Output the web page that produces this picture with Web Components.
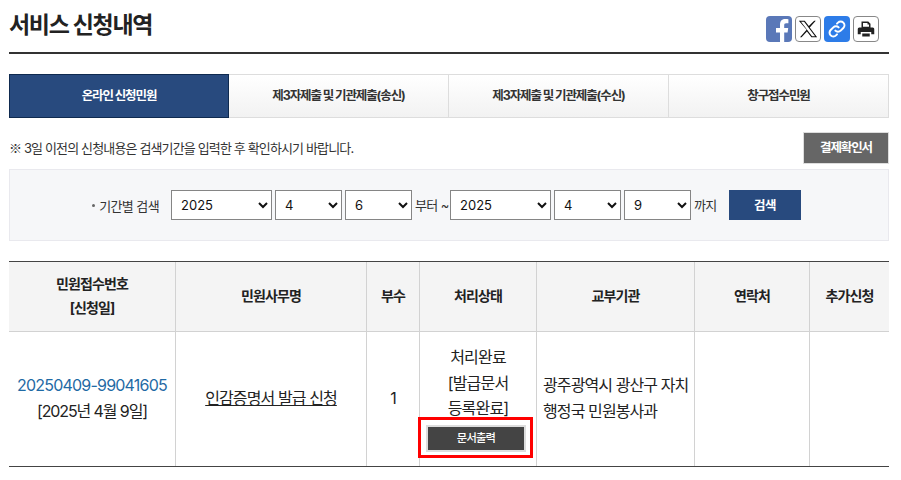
<!DOCTYPE html>
<html lang="ko">
<head>
<meta charset="utf-8">
<title>서비스 신청내역</title>
<style>
  html, body { margin: 0; background: #fff; }
  body { font-family: Inter, "Noto Sans CJK KR", sans-serif; color: #222; }
  main { display: block; width: 880px; padding: 0 12px 0 9px; }
</style>
</head>
<body>
<main>
  <page-head>서비스 신청내역</page-head>
  <tab-bar></tab-bar>
  <notice-row></notice-row>
  <search-box></search-box>
  <result-table></result-table>
</main>
<script>
class PageHead extends HTMLElement {
  constructor() {
    super();
    this.attachShadow({ mode: 'open' }).innerHTML = `
      <style>
        :host { display: flex; justify-content: space-between; align-items: flex-start; height: 52px; border-bottom: 2px solid #333; }
        h1 { margin: 10px 0 0; font-size: 23px; line-height: 30px; font-weight: 700; letter-spacing: -1.300px; color: #222; }
        .share { display: flex; gap: 3px; margin: 16px 10px 0 0; }
        .b { width: 26px; height: 26px; box-sizing: border-box; border-radius: 4px; display: flex; align-items: center; justify-content: center; overflow: hidden; }
        .line { border: 1px solid #888; background: #fff; }
        .fb { background: #5a78b8; }
        .ln { background: #2d7ce8; }
      </style>
      <h1><slot></slot></h1>
      <div class="share">
        <span class="b fb"><svg width="26" height="26" viewBox="0 0 26 26"><path fill="#fff" d="M14 26V16.500h-4V12h4V8.500C14 4.600 16.300 3 19.400 3c1.500 0 2.600.1 3 .2v4h-2.200c-1.700 0-2 .8-2 2V12h4l-.6 4.500h-3.400V26z"/></svg></span>
        <span class="b line"><svg width="20" height="20" viewBox="0 0 24 24"><path fill="#111" fill-rule="evenodd" d="M1 2h7.100l4.900 6.400L19.400 2h1.900l-7.200 8.300L23 22h-6.900l-5.400-7-6.400 7H2.400l7.900-9zM3.600 3.200L16.800 20.800h3.700L7.300 3.200z"/></svg></span>
        <span class="b ln"><svg width="20" height="20" viewBox="0 0 24 24" fill="none" stroke="#fff" stroke-width="2.400" stroke-linecap="round"><path d="M10 14a4.500 4.500 0 0 0 6.400 0l3.200-3.200a4.500 4.500 0 0 0-6.400-6.400l-1.200 1.200"/><path d="M14 10a4.500 4.500 0 0 0-6.400 0l-3.200 3.200a4.500 4.500 0 0 0 6.400 6.400l1.200-1.200"/></svg></span>
        <span class="b line"><svg width="18" height="18" viewBox="0 0 24 24"><path fill="#222" d="M6 2h9l3 3v5H6zm2 2v5h8V6h-2V4zM3 10h18a2 2 0 0 1 2 2v7h-4v-3H5v3H1v-7a2 2 0 0 1 2-2zm4 8h10v4H7z"/></svg></span>
      </div>`;
  }
}
customElements.define('page-head', PageHead);

class TabBar extends HTMLElement {
  constructor() {
    super();
    const tabs = ['온라인 신청민원', '제3자제출 및 기관제출(송신)', '제3자제출 및 기관제출(수신)', '창구접수민원'];
    this.attachShadow({ mode: 'open' }).innerHTML = `
      <style>
        :host { display: grid; grid-template-columns: repeat(4, 220px); margin-top: 20px; height: 44px; }
        a { box-sizing: border-box; display: flex; align-items: center; justify-content: center; font-size: 12.500px; font-weight: 700; letter-spacing: -1.100px; color: #333;
            border: 1px solid #ddd; border-left: 0; padding-bottom: 3px; background: linear-gradient(#fff, #f2f2f2); }
        a:last-child { border-right: 1px solid #ddd; }
        a.on { background: #284a7e; color: #fff; border: 1px solid #0f2a4f; }
      </style>
      ${tabs.map((t, i) => `<a class="${i ? '' : 'on'}">${t}</a>`).join('')}`;
  }
}
customElements.define('tab-bar', TabBar);

class NoticeRow extends HTMLElement {
  constructor() {
    super();
    this.attachShadow({ mode: 'open' }).innerHTML = `
      <style>
        :host { display: flex; justify-content: space-between; align-items: center; margin-top: 14px; height: 32px; }
        p { margin: 0 0 2px; font-size: 13px; letter-spacing: -0.860px; color: #333; }
        .m { font-family: "Noto Sans CJK KR", sans-serif; }
        button { box-sizing: border-box; width: 86px; height: 32px; margin: 0; padding: 0 0 3px; border: 1px solid #ddd; background: #666; color: #fff; font: 700 12.500px Inter, "Noto Sans CJK KR", sans-serif; letter-spacing: -1.100px; }
      </style>
      <p><span class="m">※</span> 3일 이전의 신청내용은 검색기간을 입력한 후 확인하시기 바랍니다.</p>
      <button>결제확인서</button>`;
  }
}
customElements.define('notice-row', NoticeRow);

class DateSelect extends HTMLElement {
  connectedCallback() {
    const w = this.getAttribute('width');
    this.attachShadow({ mode: 'open' }).innerHTML = `
      <style>
        :host { display: block; }
        select { display: block; box-sizing: border-box; width: ${w}px; height: 30px; padding: 0 0 0 5px; border: 1px solid #858585; border-radius: 0; background-color: #fff; color: #111; font: 13px Inter, sans-serif; }
      </style>
      <select><option>${this.getAttribute('value')}</option></select>`;
  }
}
customElements.define('date-select', DateSelect);

class SearchBox extends HTMLElement {
  constructor() {
    super();
    this.attachShadow({ mode: 'open' }).innerHTML = `
      <style>
        :host { display: flex; align-items: center; box-sizing: border-box; margin-top: 5px; height: 72px; padding: 0 0 0 81px; background: #f6f7f9; border: 1px solid #e9e9ee; }
        .t { flex: none; font-size: 13px; letter-spacing: -0.600px; color: #333; white-space: nowrap; }
        .l { box-sizing: border-box; width: 80px; padding: 0 12px 0 1px; display: flex; justify-content: space-between; align-items: center; }
        .l i { width: 3px; height: 3px; border-radius: 50%; background: #666; }
        date-select { margin-right: 3px; }
        .u { margin-top: -2px; }
        button { width: 72px; height: 30px; margin-left: 12px; border: 0; background: #284a7e; color: #fff; font: 700 12.500px Inter, "Noto Sans CJK KR", sans-serif; letter-spacing: -0.500px; padding: 0 0 2px; }
      </style>
      <span class="t l"><i></i><span>기간별 검색</span></span>
      <date-select width="101" value="2025"></date-select>
      <date-select width="67" value="4"></date-select>
      <date-select width="67" value="6"></date-select>
      <span class="t u" style="width:35px">부터 ~</span>
      <date-select width="101" value="2025"></date-select>
      <date-select width="67" value="4"></date-select>
      <date-select width="67" value="9"></date-select>
      <span class="t u" style="width:23px">까지</span>
      <button>검색</button>`;
  }
}
customElements.define('search-box', SearchBox);

class ResultTable extends HTMLElement {
  constructor() {
    super();
    this.attachShadow({ mode: 'open' }).innerHTML = `
      <style>
        :host { display: block; margin-top: 20px; position: relative; }
        table { width: 880px; table-layout: fixed; border-collapse: separate; border-spacing: 0; border-top: 1px solid #444; border-bottom: 1px solid #444; }
        th, td { border-left: 1px solid #d2d2d2; padding: 0; text-align: center; box-sizing: border-box; }
        th:first-child, td:first-child { border-left: 0; }
        th { height: 70px; background: #f4f4f4; border-bottom: 1px solid #d2d2d2; font-size: 14px; line-height: 24px; font-weight: 700; letter-spacing: -0.900px; color: #222; padding-bottom: 2px; }
        td { height: 134px; padding-bottom: 3px; font-size: 16px; line-height: 26px; letter-spacing: -0.800px; color: #222; }
        .no { color: #1f6aa5; letter-spacing: -0.800px; }
        .date { letter-spacing: -1.100px; }
        .name { letter-spacing: -0.900px; text-decoration: underline; }
        .org { text-align: left; padding: 0 4px 3px 6px; letter-spacing: -0.900px; }
        .st { vertical-align: top; padding-top: 13px; line-height: 25.500px; }
        .st a { display: block; box-sizing: border-box; width: 100px; height: 27px; margin: 3.500px 0 0 6px; background: #444; border: 2px solid #ddd; color: #fff; font-size: 11.300px; line-height: 23px; font-weight: 500; letter-spacing: -0.800px; }
        .mark { position: absolute; left: 409px; top: 156px; width: 115px; height: 41px; box-sizing: border-box; border: 3px solid #f00; }
      </style>
      <table>
        <colgroup><col width="166"><col width="191"><col width="53"><col width="117"><col width="158"><col width="115"><col width="80"></colgroup>
        <tr><th>민원접수번호<br>[신청일]</th><th>민원사무명</th><th>부수</th><th>처리상태</th><th>교부기관</th><th>연락처</th><th>추가신청</th></tr>
        <tr>
          <td><span class="no">20250409-99041605</span><br><span class="date">[2025년 4월 9일]</span></td>
          <td><span class="name">인감증명서 발급 신청</span></td>
          <td>1</td>
          <td class="st">처리완료<br>[발급문서<br>등록완료]<a>문서출력</a></td>
          <td class="org">광주광역시 광산구 자치행정국 민원봉사과</td>
          <td></td><td></td>
        </tr>
      </table>
      <div class="mark"></div>`;
  }
}
customElements.define('result-table', ResultTable);
</script>
</body>
</html>
